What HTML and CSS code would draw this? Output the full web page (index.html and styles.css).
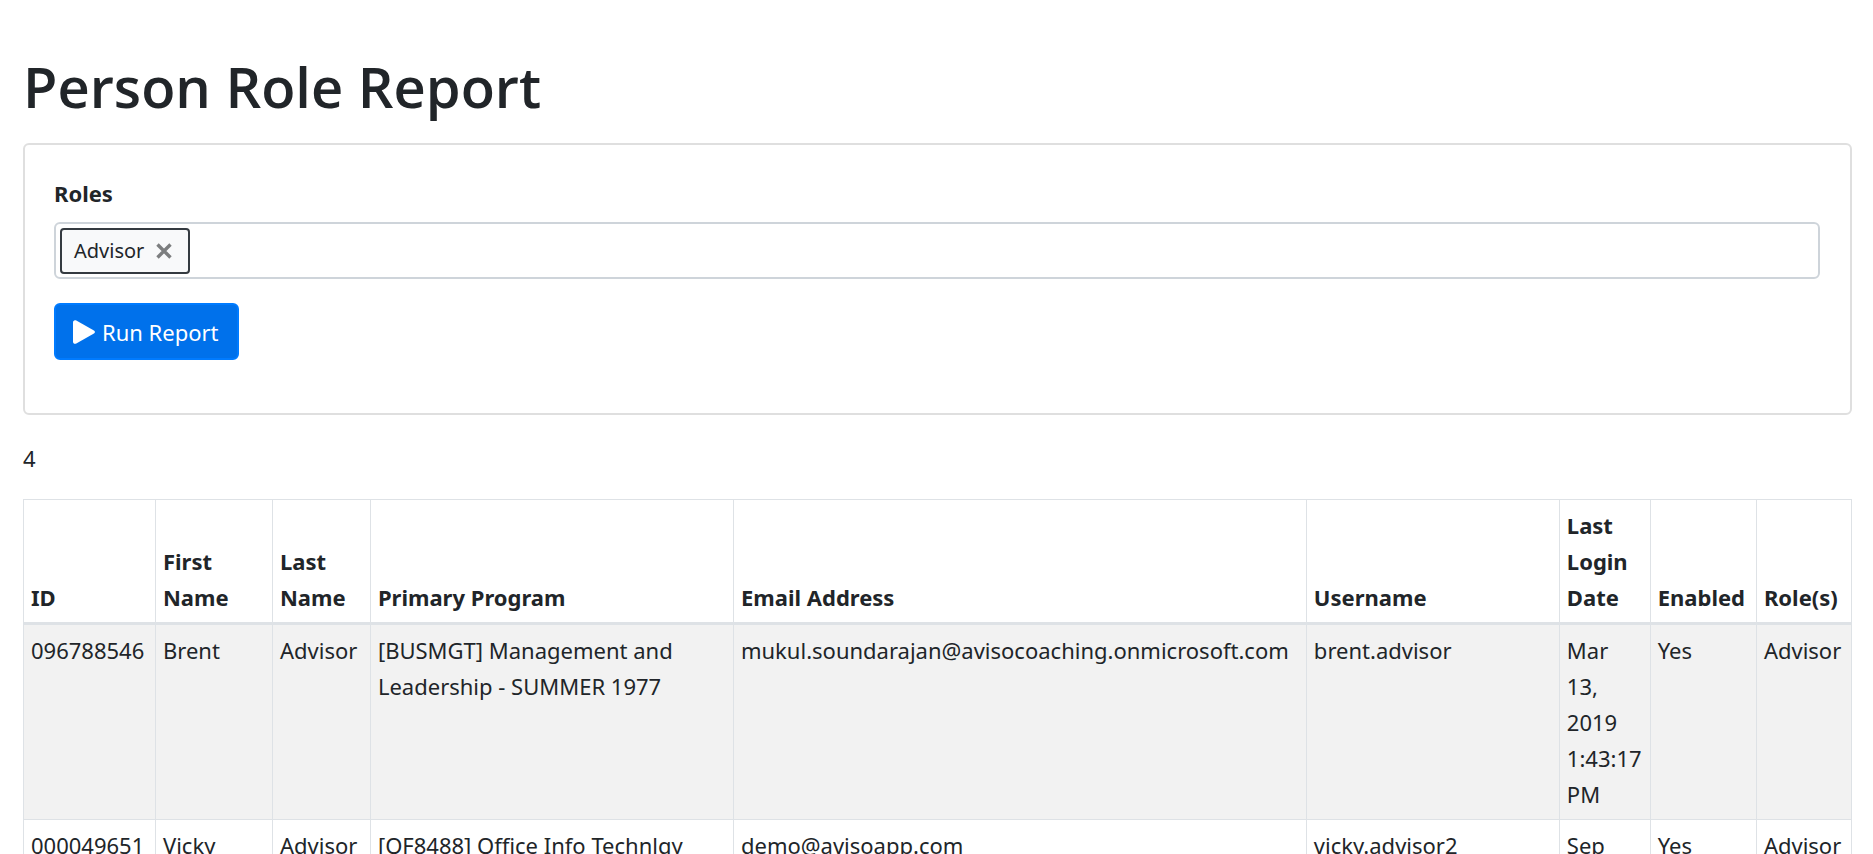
FILE: index.html
```html
<!DOCTYPE html>
<html lang="en">
<head>
<meta charset="utf-8">
<title>Person Role Report</title>
<link rel="stylesheet" href="styles.css">
</head>
<body>
<main class="page">
  <h1 class="title">Person Role Report</h1>
  <form class="card">
    <label class="label" for="roles">Roles</label>
    <div class="field">
      <span class="tag">Advisor
        <button class="tag-remove" type="button" aria-label="Remove Advisor">
          <svg width="16" height="16" viewBox="0 0 16 16"><path d="M1.5 1.5 14.500 14.500M14.500 1.500 1.500 14.500" stroke="#7c7e7f" stroke-width="3.400" fill="none"/></svg>
        </button>
      </span>
      <input class="field-input" id="roles" type="text">
    </div>
    <button class="run" type="button">
      <svg width="22" height="24" viewBox="0 0 22 24"><path d="M0 2.500C0 .6 1.500-.4 3.300.5L20.500 10.200C22.400 11.300 22.400 12.700 20.500 13.800L3.300 23.500C1.500 24.400 0 23.400 0 21.500Z" fill="#fff"/></svg>
      <span>Run Report</span>
    </button>
  </form>
  <p class="count">4</p>
  <table class="table">
    <colgroup>
      <col class="c-id"><col class="c-first"><col class="c-last"><col class="c-program"><col class="c-email"><col class="c-user"><col class="c-date"><col class="c-enabled"><col class="c-role">
    </colgroup>
    <thead>
      <tr><th>ID</th><th>First Name</th><th>Last Name</th><th>Primary Program</th><th>Email Address</th><th>Username</th><th>Last Login Date</th><th>Enabled</th><th>Role(s)</th></tr>
    </thead>
    <tbody>
      <tr><td>096788546</td><td>Brent</td><td>Advisor</td><td>[BUSMGT] Management and Leadership - SUMMER 1977</td><td>mukul.soundarajan@avisocoaching.onmicrosoft.com</td><td>brent.advisor</td><td>Mar 13, 2019 1:43:17 PM</td><td>Yes</td><td>Advisor</td></tr>
      <tr><td>000049651</td><td>Vicky</td><td>Advisor</td><td>[OF8488] Office Info Technlgy</td><td>demo@avisoapp.com</td><td>vicky.advisor2</td><td>Sep</td><td>Yes</td><td>Advisor</td></tr>
    </tbody>
  </table>
</main>
</body>
</html>
```
FILE: styles.css
```css
* { box-sizing: border-box; }
body {
  margin: 0;
  background: #fff;
  color: #212529;
  font-family: "Noto Sans", "Open Sans", sans-serif;
  font-size: 22px;
  line-height: 36px;
}
.page {
  height: 100vh;
  overflow: hidden;
  padding: 50px 21px 0 23px;
}
.title {
  margin: 0 0 21px;
  font-family: "Open Sans", "Noto Sans", sans-serif;
  font-size: 56px;
  font-weight: 600;
  line-height: 72px;
}
.card {
  display: flex;
  flex-direction: column;
  align-items: flex-start;
  padding: 30px 30px 53px 29px;
  border: 2px solid #dfdfdf;
  border-radius: 6px;
}
.label { margin-bottom: 11px; font-weight: 700; }
.field {
  display: flex;
  width: 100%;
  margin-bottom: 24px;
  padding: 4px 4px 3px;
  border: 2px solid #ced4da;
  border-radius: 6px;
}
.tag {
  display: flex;
  align-items: center;
  gap: 12px;
  height: 46px;
  padding: 0 16px 0 12px;
  border: 2px solid #343a40;
  border-radius: 4px;
  background: #f8f9fa;
  font-size: 20px;
}
.tag-remove { display: flex; padding: 0; border: 0; background: none; }
.field-input {
  flex: 1;
  min-width: 0;
  border: 0;
  outline: 0;
  background: none;
  font: inherit;
}
.run {
  display: flex;
  align-items: center;
  gap: 7px;
  height: 57px;
  padding: 0 18px 0 17px;
  border: 2px solid #007bff;
  border-radius: 6px;
  background: #0071eb;
  color: #fff;
  font: inherit;
}
.count { margin: 25px 0 23px; }
.table {
  width: 100%;
  table-layout: fixed;
  border-collapse: collapse;
}
.table th, .table td {
  padding: 7px;
  border: 1px solid #dee2e6;
  text-align: left;
  vertical-align: top;
}
.table th { vertical-align: bottom; border-bottom-width: 3px; }
.table tbody tr:nth-child(odd) { background: #f2f2f2; }
.c-id { width: 7.22%; }
.c-first { width: 6.4%; }
.c-last { width: 5.36%; }
.c-program { width: 19.86%; }
.c-email { width: 31.34%; }
.c-user { width: 13.84%; }
.c-date { width: 4.97%; }
.c-enabled { width: 5.81%; }
.c-role { width: 5.2%; }
```
